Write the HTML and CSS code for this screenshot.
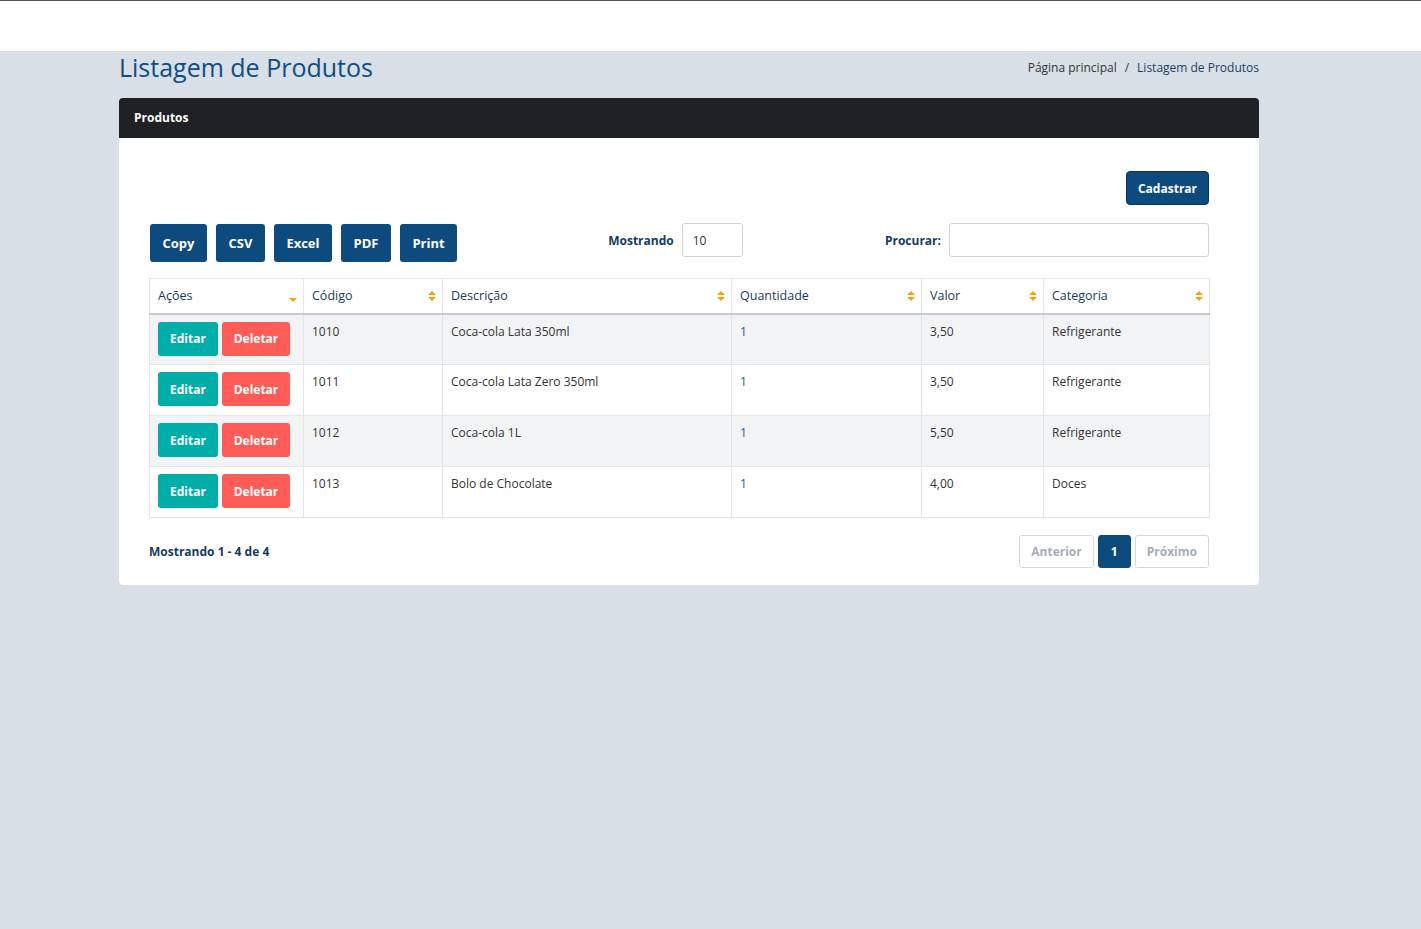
FILE: index.html
```html
<!DOCTYPE html>
<html lang="pt-BR">
<head>
<meta charset="utf-8">
<title>Listagem de Produtos</title>
<link rel="stylesheet" href="styles.css">
</head>
<body>
<header class="topbar"></header>
<main class="container">
  <div class="page-head">
    <h1 class="page-title">Listagem de Produtos</h1>
    <nav class="breadcrumb">
      <span class="crumb">Página principal</span>
      <span class="sep">/</span>
      <span class="crumb active">Listagem de Produtos</span>
    </nav>
  </div>
  <section class="card">
    <div class="card-header">Produtos</div>
    <div class="card-body">
      <div class="actions-top">
        <button class="btn btn-primary btn-cad">Cadastrar</button>
      </div>
      <div class="toolbar">
        <div class="export-btns">
          <button class="btn btn-primary btn-exp">Copy</button>
          <button class="btn btn-primary btn-exp">CSV</button>
          <button class="btn btn-primary btn-exp">Excel</button>
          <button class="btn btn-primary btn-exp">PDF</button>
          <button class="btn btn-primary btn-exp">Print</button>
        </div>
        <label class="length"><span>Mostrando</span><input class="input input-len" type="text" value="10"></label>
        <label class="search"><span>Procurar:</span><input class="input input-search" type="text"></label>
      </div>
      <table class="table">
        <colgroup>
          <col class="c1"><col class="c2"><col class="c3"><col class="c4"><col class="c5"><col>
        </colgroup>
        <thead>
          <tr>
            <th><span>Ações</span><i class="sort sort-desc"></i></th>
            <th><span>Código</span><i class="sort"></i></th>
            <th><span>Descrição</span><i class="sort"></i></th>
            <th><span>Quantidade</span><i class="sort"></i></th>
            <th><span>Valor</span><i class="sort"></i></th>
            <th><span>Categoria</span><i class="sort"></i></th>
          </tr>
        </thead>
        <tbody>
          <tr>
            <td class="acts"><div class="acts-wrap"><button class="btn btn-edit">Editar</button><button class="btn btn-del">Deletar</button></div></td>
            <td>1010</td><td>Coca-cola Lata 350ml</td><td class="qty">1</td><td>3,50</td><td>Refrigerante</td>
          </tr>
          <tr>
            <td class="acts"><div class="acts-wrap"><button class="btn btn-edit">Editar</button><button class="btn btn-del">Deletar</button></div></td>
            <td>1011</td><td>Coca-cola Lata Zero 350ml</td><td class="qty">1</td><td>3,50</td><td>Refrigerante</td>
          </tr>
          <tr>
            <td class="acts"><div class="acts-wrap"><button class="btn btn-edit">Editar</button><button class="btn btn-del">Deletar</button></div></td>
            <td>1012</td><td>Coca-cola 1L</td><td class="qty">1</td><td>5,50</td><td>Refrigerante</td>
          </tr>
          <tr>
            <td class="acts"><div class="acts-wrap"><button class="btn btn-edit">Editar</button><button class="btn btn-del">Deletar</button></div></td>
            <td>1013</td><td>Bolo de Chocolate</td><td class="qty">1</td><td>4,00</td><td>Doces</td>
          </tr>
        </tbody>
      </table>
      <div class="table-foot">
        <div class="info">Mostrando 1 - 4 de 4</div>
        <div class="pager">
          <button class="page-btn disabled">Anterior</button>
          <button class="page-btn current">1</button>
          <button class="page-btn disabled">Próximo</button>
        </div>
      </div>
    </div>
  </section>
</main>
</body>
</html>
```

FILE: styles.css
```css
* { box-sizing: border-box; }
html, body { margin: 0; padding: 0; }
body {
  background: #d9dfe7;
  font-family: "Open Sans", "Noto Sans", sans-serif;
  color: #333;
  min-height: 929px;
}
.topbar {
  height: 51px;
  background: #fff;
  border-top: 1px solid #555;
}
.container {
  width: 1140px;
  margin-left: 119px;
}
.page-head {
  display: flex;
  justify-content: space-between;
  align-items: center;
  height: 47px;
}
.page-title {
  margin: 0;
  font-size: 25px;
  font-weight: 400;
  color: #0e4e82;
  line-height: 32px;
  margin-top: -15px;
}
.breadcrumb {
  font-size: 12px;
  color: #333;
  display: flex;
  gap: 8px;
  margin-top: -15px;
}
.breadcrumb .active { color: #1c3f63; }
.card {
  background: #fff;
  border-radius: 4px;
  overflow: hidden;
}
.card-header {
  background: #1f2125;
  color: #fff;
  font-weight: 700;
  font-size: 12px;
  height: 40px;
  line-height: 40px;
  padding-left: 15px;
}
.card-body {
  padding: 33px 50px 17px 30px;
}
.btn {
  border: 0;
  font-family: inherit;
  font-weight: 700;
  color: #fff;
  cursor: pointer;
  border-radius: 3px;
}
.btn-primary { background: #0d4b7e; }
.actions-top {
  display: flex;
  justify-content: flex-end;
}
.btn-cad {
  height: 34px;
  width: 83px;
  font-size: 12px;
  border: 1px solid #083459;
  border-radius: 4px;
}
.toolbar {
  display: flex;
  align-items: center;
  margin-top: 15px;
  height: 40px;
}
.export-btns {
  display: flex;
  gap: 9px;
  padding-left: 1px;
  margin-top: 6px;
}
.btn-exp {
  height: 38px;
  font-size: 13px;
  padding: 0 12.5px;
}
.length, .search {
  display: flex;
  align-items: center;
  font-weight: 700;
  font-size: 12px;
  color: #163c61;
}
.length { margin-left: 151px; gap: 8px; }
.search { margin-left: auto; gap: 8px; }
.input {
  height: 34px;
  border: 1px solid #ccd3db;
  border-radius: 3px;
  font-family: inherit;
  font-size: 12px;
  color: #333;
  padding: 0 10px;
}
.input-len { width: 61px; }
.input-search { width: 260px; }
.table {
  width: 1061px;
  margin-top: 18px;
  border-collapse: collapse;
  table-layout: fixed;
  font-size: 12px;
}
.c1 { width: 154px; }
.c2 { width: 139px; }
.c3 { width: 289px; }
.c4 { width: 190px; }
.c5 { width: 122px; }
.table th, .table td {
  border: 1px solid #e3e5e8;
  text-align: left;
  vertical-align: top;
}
.table th {
  height: 35px;
  padding: 0 8px;
  font-weight: 400;
  font-size: 12.5px;
  color: #183b5d;
  vertical-align: middle;
  position: relative;
  border-bottom: 2px solid #c9ccd1;
}
.table td {
  height: 51px;
  padding: 8px 8px;
  color: #333;
}
.table tbody tr:nth-child(odd) td { background: #f2f3f5; }
.table td.qty { color: #2a5a86; }
.table td.acts { padding-top: 7px; }
.acts-wrap {
  display: flex;
  gap: 4px;
}
.sort {
  position: absolute;
  right: 6px;
  top: 50%;
  width: 8px;
  height: 10px;
  margin-top: -5px;
}
.sort::before, .sort::after {
  content: "";
  position: absolute;
  left: 0;
  border-left: 4px solid transparent;
  border-right: 4px solid transparent;
}
.sort::before { top: 0; border-bottom: 4px solid #f0a30a; }
.sort::after { bottom: 0; border-top: 4px solid #f0a30a; }
.sort-desc::before { display: none; }
.sort-desc::after { bottom: -1px; }
.btn-edit, .btn-del {
  height: 34px;
  font-size: 12px;
  border-radius: 3px;
}
.btn-edit { background: #00aea9; width: 60px; }
.btn-del { background: #ff5b57; width: 68px; }
.table-foot {
  display: flex;
  justify-content: space-between;
  align-items: center;
  margin-top: 17px;
  width: 1060px;
}
.info {
  font-size: 12px;
  font-weight: 700;
  color: #163c61;
}
.pager { display: flex; gap: 4px; }
.page-btn {
  height: 33px;
  border: 1px solid #d5d9de;
  background: #fff;
  color: #a7adb5;
  font-family: inherit;
  font-size: 12px;
  font-weight: 700;
  border-radius: 3px;
  padding: 0 11px;
}
.page-btn.current {
  background: #0d4b7e;
  border-color: #0d4b7e;
  color: #fff;
  width: 33px;
  padding: 0;
}
```
